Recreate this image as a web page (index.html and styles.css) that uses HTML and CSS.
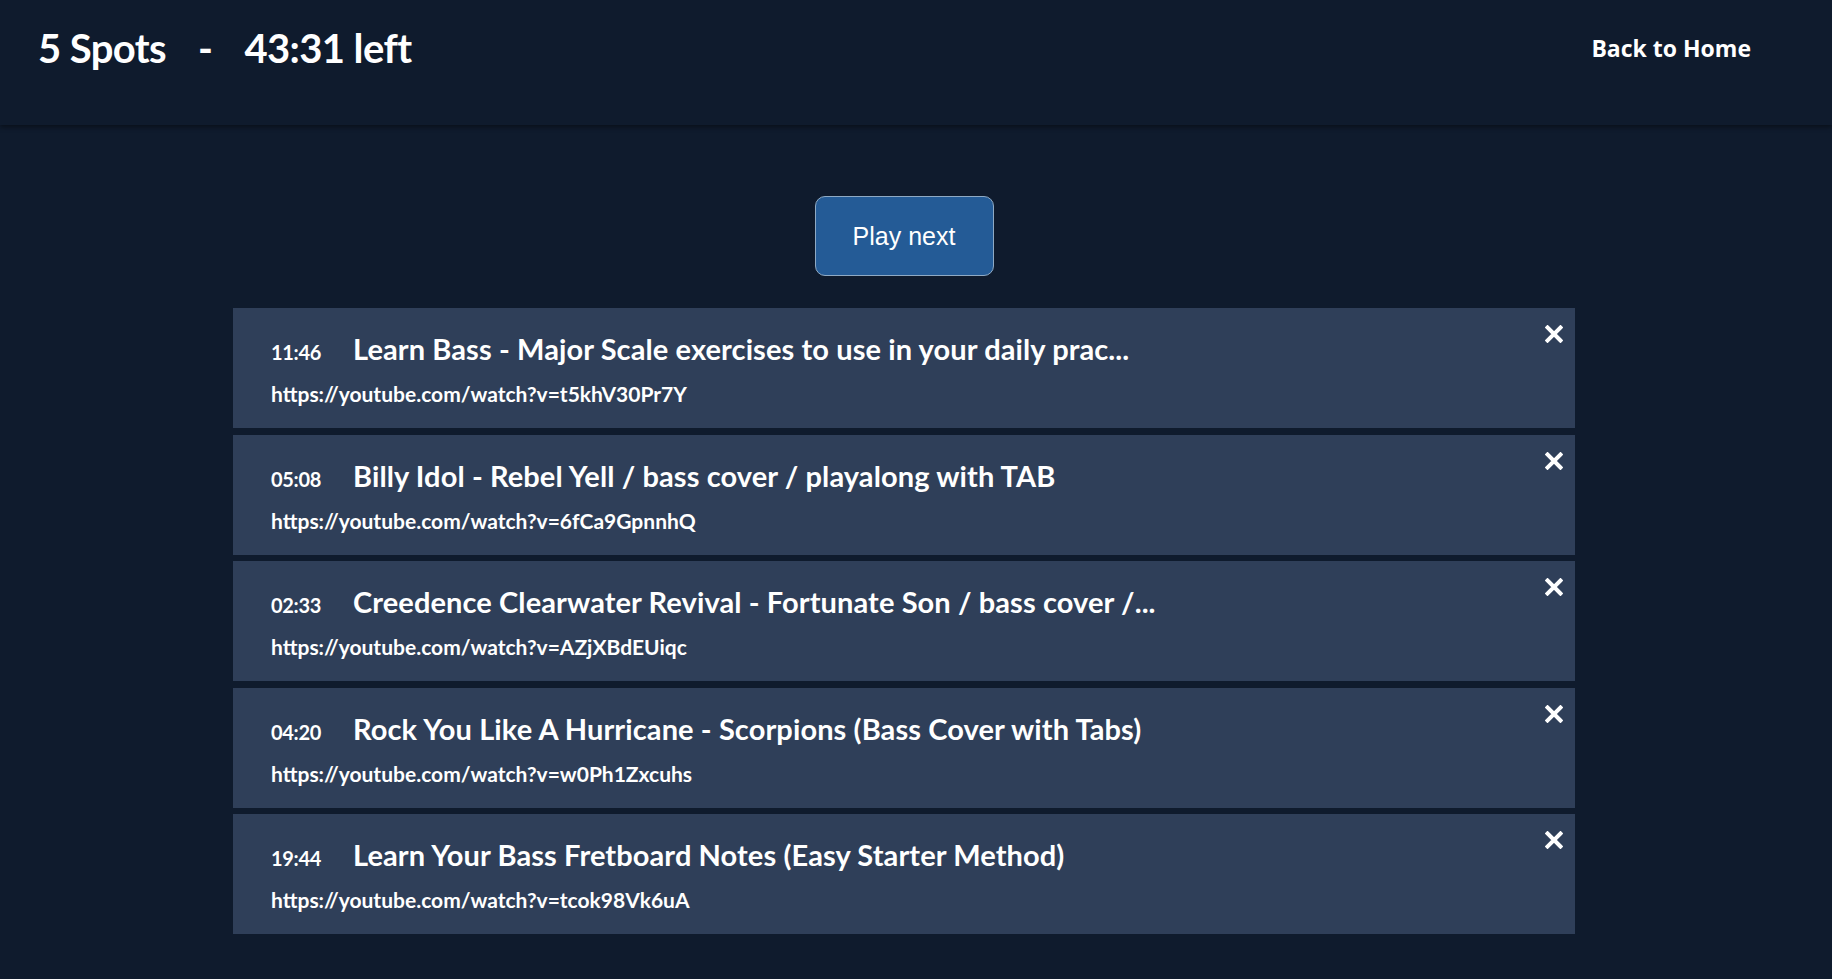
FILE: index.html
```html
<!DOCTYPE html>
<html>
<head>
<meta charset="utf-8">
<title>Queue</title>
<link rel="stylesheet" href="styles.css">
</head>
<body>
<header class="topbar">
  <h1 class="status">
    <span>5 Spots</span>
    <span>-</span>
    <span>43:31 left</span>
  </h1>
  <a class="home-link" href="#">Back to Home</a>
</header>
<main class="queue">
  <div class="actions">
    <button class="play-btn">Play next</button>
  </div>
  <ul class="tracks">
    <li class="track">
      <div class="track-head"><span class="dur">11:46</span><span class="name">Learn Bass - Major Scale exercises to use in your daily prac...</span></div>
      <div class="url">https://youtube.com/watch?v=t5khV30Pr7Y</div>
      <button class="remove" aria-label="Remove"><svg viewBox="0 0 18 18" width="18" height="18"><path d="M2.5 2.5 L15.5 15.5 M15.5 2.5 L2.5 15.5" stroke="#fff" stroke-width="4" stroke-linecap="square" fill="none"/></svg></button>
    </li>
    <li class="track">
      <div class="track-head"><span class="dur">05:08</span><span class="name">Billy Idol - Rebel Yell / bass cover / playalong with TAB</span></div>
      <div class="url">https://youtube.com/watch?v=6fCa9GpnnhQ</div>
      <button class="remove" aria-label="Remove"><svg viewBox="0 0 18 18" width="18" height="18"><path d="M2.5 2.5 L15.5 15.5 M15.5 2.5 L2.5 15.5" stroke="#fff" stroke-width="4" stroke-linecap="square" fill="none"/></svg></button>
    </li>
    <li class="track">
      <div class="track-head"><span class="dur">02:33</span><span class="name">Creedence Clearwater Revival - Fortunate Son / bass cover /...</span></div>
      <div class="url">https://youtube.com/watch?v=AZjXBdEUiqc</div>
      <button class="remove" aria-label="Remove"><svg viewBox="0 0 18 18" width="18" height="18"><path d="M2.5 2.5 L15.5 15.5 M15.5 2.5 L2.5 15.5" stroke="#fff" stroke-width="4" stroke-linecap="square" fill="none"/></svg></button>
    </li>
    <li class="track">
      <div class="track-head"><span class="dur">04:20</span><span class="name">Rock You Like A Hurricane - Scorpions (Bass Cover with Tabs)</span></div>
      <div class="url">https://youtube.com/watch?v=w0Ph1Zxcuhs</div>
      <button class="remove" aria-label="Remove"><svg viewBox="0 0 18 18" width="18" height="18"><path d="M2.5 2.5 L15.5 15.5 M15.5 2.5 L2.5 15.5" stroke="#fff" stroke-width="4" stroke-linecap="square" fill="none"/></svg></button>
    </li>
    <li class="track">
      <div class="track-head"><span class="dur">19:44</span><span class="name">Learn Your Bass Fretboard Notes (Easy Starter Method)</span></div>
      <div class="url">https://youtube.com/watch?v=tcok98Vk6uA</div>
      <button class="remove" aria-label="Remove"><svg viewBox="0 0 18 18" width="18" height="18"><path d="M2.5 2.5 L15.5 15.5 M15.5 2.5 L2.5 15.5" stroke="#fff" stroke-width="4" stroke-linecap="square" fill="none"/></svg></button>
    </li>
  </ul>
</main>
</body>
</html>
```

FILE: styles.css
```css
html, body {
  margin: 0;
  padding: 0;
  background: #0f1b2d;
  color: #fff;
  font-family: Lato, "Open Sans", sans-serif;
  min-height: 100%;
}

.topbar {
  height: 125px;
  box-sizing: border-box;
  display: flex;
  justify-content: space-between;
  align-items: flex-start;
  padding: 0 81px 0 38px;
  background: #0f1b2d;
  box-shadow: 0 2px 5px rgba(0, 0, 0, 0.45);
  position: relative;
}

.status {
  margin: 24px 0 0 0;
  display: flex;
  gap: 32px;
  font-family: Lato, sans-serif;
  font-weight: 700;
  font-size: 40px;
  line-height: 48px;
  letter-spacing: -0.6px;
}

.home-link {
  margin-top: 33px;
  color: #fff;
  text-decoration: none;
  font-family: "Open Sans", sans-serif;
  font-weight: 700;
  font-size: 23px;
  line-height: 30px;
  letter-spacing: 0;
}

.queue {
  width: 1342px;
  margin-left: 233px;
  padding-top: 71px;
}

.actions {
  display: flex;
  justify-content: center;
  margin-bottom: 32px;
}

.play-btn {
  width: 179px;
  height: 80px;
  background: #245b96;
  border: 1px solid #8faac4;
  border-radius: 10px;
  color: #fff;
  font-family: "Liberation Sans", Arial, sans-serif;
  font-size: 25px;
  cursor: pointer;
  padding: 0;
}

.tracks {
  list-style: none;
  margin: 0;
  padding: 0;
  display: flex;
  flex-direction: column;
  gap: 6.5px;
}

.track {
  position: relative;
  height: 120px;
  box-sizing: border-box;
  background: #2f3f59;
  padding: 23px 60px 0 38px;
}

.track-head {
  display: flex;
  align-items: baseline;
  line-height: 36px;
}

.dur {
  font-weight: 700;
  font-size: 20px;
  width: 82px;
  flex: none;
  letter-spacing: -0.3px;
}

.name {
  font-weight: 700;
  font-size: 29px;
  letter-spacing: 0.1px;
  white-space: nowrap;
}

.url {
  margin-top: 11px;
  font-weight: 700;
  font-size: 21px;
  line-height: 26px;
  letter-spacing: 0;
}

.remove {
  position: absolute;
  top: 17px;
  right: 12px;
  width: 18px;
  height: 18px;
  padding: 0;
  border: 0;
  background: none;
  cursor: pointer;
  display: block;
}

.remove svg {
  display: block;
}
```
